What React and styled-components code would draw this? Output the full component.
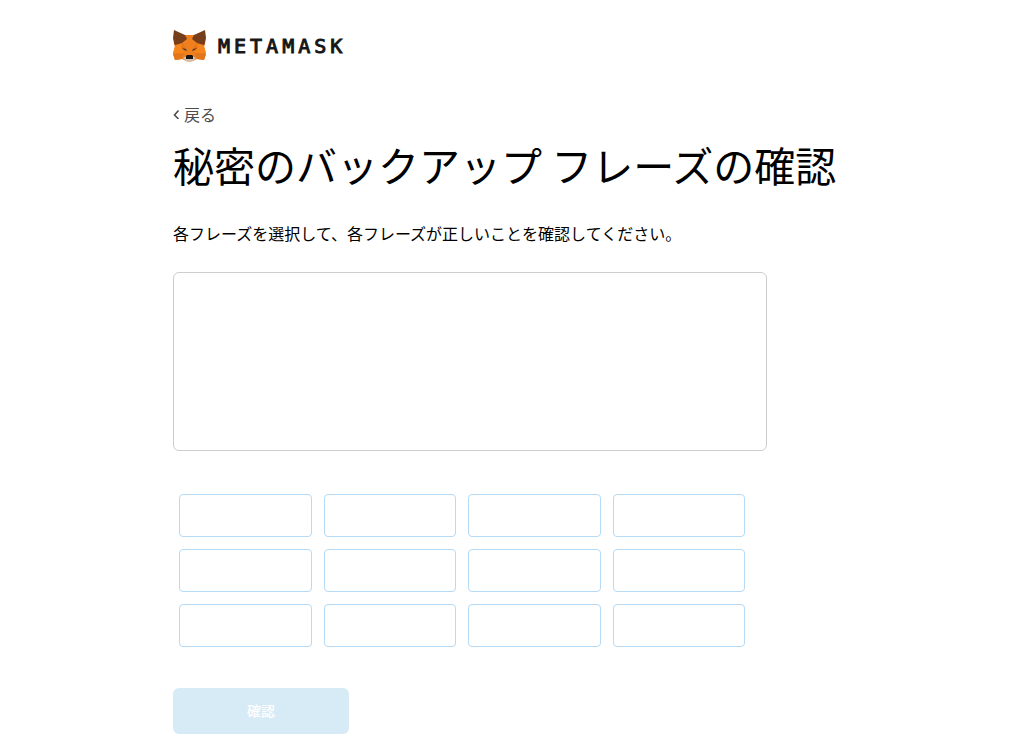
import React from "react";
import styled, { createGlobalStyle } from "styled-components";

const GlobalStyle = createGlobalStyle`
  * {
    box-sizing: border-box;
  }

  body {
    margin: 0;
    background-color: #ffffff;
    color: #000000;
    font-family: "Noto Sans CJK JP", sans-serif;
  }
`;

const Page = styled.main`
  max-width: 678px;
  margin: 0 auto;
  padding: 28px 0 20px;
`;

const Header = styled.header`
  display: flex;
  align-items: center;
  gap: 12px;
  height: 35px;
  margin-bottom: 37px;

  svg {
    width: 33px;
    height: 32px;
  }
`;

const Wordmark = styled.span`
  font-family: "DejaVu Sans Mono", monospace;
  font-size: 20px;
  line-height: 24px;
  letter-spacing: 4px;
  color: #161616;
  -webkit-text-stroke: 1px #161616;
`;

const BackLink = styled.a`
  display: inline-flex;
  align-items: center;
  gap: 4px;
  font-size: 16px;
  line-height: 24px;
  color: #4d4d4d;
  text-decoration: none;

  svg {
    width: 7px;
    height: 10px;
  }
`;

const Title = styled.h1`
  margin: 8px 0 27px;
  font-size: 41px;
  font-weight: 400;
  line-height: 60px;
`;

const Description = styled.p`
  margin: 0 0 27px;
  font-size: 16px;
  line-height: 24px;
`;

const SelectedWords = styled.div`
  max-width: 594px;
  min-height: 179px;
  margin-bottom: 43px;
  border: 1px solid #cdcdcd;
  border-radius: 6px;
`;

const WordGrid = styled.div`
  display: grid;
  grid-template-columns: repeat(4, 1fr);
  gap: 12px;
  max-width: 578px;
  margin-bottom: 41px;
  padding: 0 6px;
`;

const WordButton = styled.button`
  height: 43px;
  border: 1px solid #b5dbf7;
  border-radius: 4px;
  background-color: #ffffff;
`;

const ConfirmButton = styled.button`
  width: 176px;
  height: 46px;
  padding: 0 0 3px;
  border: none;
  border-radius: 6px;
  background-color: #d7ebf6;
  color: #ffffff;
  font-family: inherit;
  font-size: 14px;
  font-weight: 500;
  line-height: 20px;
`;

const FoxLogo = () => (
  <svg viewBox="0 0 33 32" aria-hidden="true">
    <path fill="#f07f1d" d="M1 1 10 5h13l9-4v13l-1 3 2 7-2 6-7-1-4 2h-7l-4-2-7 1-2-6 2-7-1-3z" />
    <path fill="#f6851b" d="m2 16 8-2 1 9H0zM31 16l-8-2-1 9h11z" />
    <path fill="#e2761b" d="m0 24 11-1-2 6-7 1zM33 24l-11-1 2 6 7 1z" />
    <path fill="#763e1a" d="M1 0 12 5l2 4-5 4-7 2-1-2-1-5z" />
    <path fill="#763e1a" d="M32 0 21 5l-2 4 5 4 7 2 1-2 1-5z" />
    <path fill="#e2761b" d="m10 13 4 8-6-3zM23 13l-4 8 6-3z" />
    <path fill="#5c3d25" d="m9 18 4 1 1 2-3-1zM24 18l-4 1-1 2 3-1z" />
    <path fill="#d7c1b3" d="m10 28 4-2h5l4 2-4 4h-5z" />
    <path fill="#161616" d="m13 26 1-1h5l1 1v3h-7z" />
  </svg>
);

const BackIcon = () => (
  <svg viewBox="0 0 7 10" aria-hidden="true">
    <path d="M5.5 1.5 1.5 6l4 4" fill="none" stroke="#4d4d4d" strokeWidth="1.6" />
  </svg>
);

const words = Array.from({ length: 12 }, (_, i) => i + 1);

const App = () => {
  return (
    <>
      <GlobalStyle />
      <Page>
        <Header>
          <FoxLogo />
          <Wordmark>METAMASK</Wordmark>
        </Header>
        <BackLink href="#back">
          <BackIcon />
          戻る
        </BackLink>
        <Title>秘密のバックアップ フレーズの確認</Title>
        <Description>
          各フレーズを選択して、各フレーズが正しいことを確認してください。
        </Description>
        <SelectedWords />
        <WordGrid>
          {words.map((word) => (
            <WordButton key={word} type="button" aria-label={`${word}`} />
          ))}
        </WordGrid>
        <ConfirmButton type="button" disabled>
          確認
        </ConfirmButton>
      </Page>
    </>
  );
};

export default App;
